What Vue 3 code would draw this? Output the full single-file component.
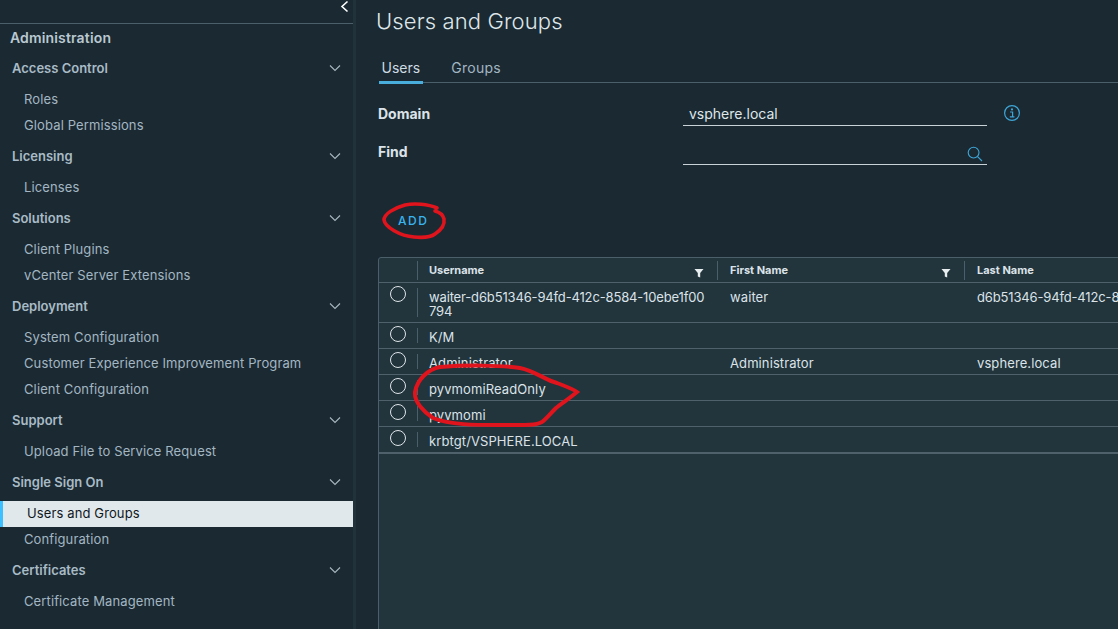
<script setup>
const groups = [
  { title: 'Access Control', items: ['Roles', 'Global Permissions'] },
  { title: 'Licensing', items: ['Licenses'] },
  { title: 'Solutions', items: ['Client Plugins', 'vCenter Server Extensions'] },
  { title: 'Deployment', items: ['System Configuration', 'Customer Experience Improvement Program', 'Client Configuration'] },
  { title: 'Support', items: ['Upload File to Service Request'] },
  { title: 'Single Sign On', items: ['Users and Groups', 'Configuration'] },
  { title: 'Certificates', items: ['Certificate Management'] }
]
const rows = [
  { user: 'waiter-d6b51346-94fd-412c-8584-10ebe1f00794', first: 'waiter', last: 'd6b51346-94fd-412c-8584-10ebe1f00794' },
  { user: 'K/M', first: '', last: '' },
  { user: 'Administrator', first: 'Administrator', last: 'vsphere.local' },
  { user: 'pyvmomiReadOnly', first: '', last: '' },
  { user: 'pyvmomi', first: '', last: '' },
  { user: 'krbtgt/VSPHERE.LOCAL', first: '', last: '' }
]
</script>

<template>
  <div class="page">
    <aside class="side">
      <div class="collapse">
        <svg width="10" height="14" viewBox="0 0 10 14"><path d="M7.5 1.5 L2 6.5 L7.5 11.5" fill="none" stroke="#fff" stroke-width="1.6"/></svg>
      </div>
      <h2 class="admin">Administration</h2>
      <section v-for="g in groups" :key="g.title" class="group">
        <div class="ghead">
          <span>{{ g.title }}</span>
          <svg width="12" height="8" viewBox="0 0 12 8"><path d="M1 1.5 L6 6.5 L11 1.5" fill="none" stroke="#a9b8c0" stroke-width="1.1"/></svg>
        </div>
        <div class="gitems">
          <a v-for="i in g.items" :key="i" class="item" :class="{ active: i === 'Users and Groups' }">{{ i }}</a>
        </div>
      </section>
    </aside>

    <main class="main">
      <h1 class="title">Users and Groups</h1>
      <nav class="tabs">
        <span class="tab on">Users</span>
        <span class="tab">Groups</span>
      </nav>
      <div class="form">
        <div class="frow">
          <label>Domain</label>
          <div class="field">vsphere.local</div>
          <svg class="info" width="18" height="18" viewBox="0 0 18 18">
            <circle cx="9" cy="9" r="7.4" fill="none" stroke="#3ea6d8" stroke-width="1.2"/>
            <circle cx="9" cy="5.4" r="1.1" fill="#3ea6d8"/>
            <path d="M7 8 H9.6 V12.6 M6.8 12.8 H11.4" fill="none" stroke="#3ea6d8" stroke-width="1.2"/>
          </svg>
        </div>
        <div class="frow find">
          <label>Find</label>
          <div class="field search">
            <svg width="16" height="16" viewBox="0 0 16 16">
              <circle cx="6.6" cy="6.6" r="5.4" fill="none" stroke="#3ea6d8" stroke-width="1.1"/>
              <path d="M10.6 10.6 L15 15" fill="none" stroke="#3ea6d8" stroke-width="1.1"/>
            </svg>
          </div>
        </div>
      </div>
      <button class="add">ADD</button>
      <div class="grid">
        <div class="tr head">
          <div class="td sel"></div>
          <div class="td user">Username<svg class="funnel" width="10" height="10" viewBox="0 0 10 10"><path d="M0.5 1 H9.5 L6.2 5 V9.5 L3.8 8.5 V5 Z" fill="#e8edf0"/></svg></div>
          <div class="td first">First Name<svg class="funnel" width="10" height="10" viewBox="0 0 10 10"><path d="M0.5 1 H9.5 L6.2 5 V9.5 L3.8 8.5 V5 Z" fill="#e8edf0"/></svg></div>
          <div class="td last">Last Name</div>
        </div>
        <div v-for="r in rows" :key="r.user" class="tr">
          <div class="td sel"><span class="radio"></span></div>
          <div class="td user" :class="{ long: r.user.length > 30 }">{{ r.user }}</div>
          <div class="td first">{{ r.first }}</div>
          <div class="td last" :class="{ long: r.last.length > 30 }">{{ r.last }}</div>
        </div>
      </div>
    </main>

    <svg class="ink" width="1118" height="629" viewBox="0 0 1118 629">
      <path d="M437 208 C428 204 414 203 405 205 C394 208 384 214 384 220 C385 227 400 236 414 237 C424 238 431 237 435 234 C441 230 445 225 444 219 C443 215 439 212 435 211" fill="none" stroke="#e0141c" stroke-width="3.6" stroke-linecap="round"/>
      <path d="M433 418 C424 412 414 402 415 392 C417 380 428 369 440 367 C465 365 500 365 520 368 C535 371 545 380 557 383 C565 386 573 389 577 392 C570 398 562 403 556 408 C550 414 546 419 542 422 C535 426 520 425 500 425 C475 425 450 425 433 418" fill="none" stroke="#e0141c" stroke-width="4" stroke-linecap="round"/>
    </svg>
  </div>
</template>

<style>
html, body { margin: 0; overflow: hidden; background: #1b2a32; }
</style>

<style scoped>
.page {
  position: relative;
  width: 1118px;
  height: 629px;
  display: flex;
  overflow: hidden;
  background: #1b2a32;
  font-family: Inter, "Open Sans", sans-serif;
  font-size: 13px;
  color: #e8edf0;
}
.side {
  width: 353px;
  flex: none;
  border-right: 3px solid #22323b;
  color: #a9bbc6;
}
.collapse {
  height: 24px;
  box-sizing: border-box;
  border-bottom: 1px solid #4b5f6b;
  display: flex;
  justify-content: flex-end;
  padding: 0 3px 0 0;
  align-items: flex-start;
}
.admin {
  margin: 0;
  height: 31px;
  line-height: 27px;
  padding-left: 10px;
  font-size: 14px;
  font-weight: 600;
  letter-spacing: 0.15px;
  color: #b9c8d1;
}
.group { padding-bottom: 4px; }
.ghead {
  height: 26px;
  padding: 0 12px;
  display: flex;
  align-items: center;
  justify-content: space-between;
  font-weight: 600;
  font-size: 13px;
  color: #a9bbc6;
}
.gitems { padding-top: 6px; }
.item {
  display: block;
  height: 26px;
  line-height: 24px;
  padding-left: 24px;
  color: #a3b6c2;
  letter-spacing: 0.12px;
}
.item.active {
  background: #e1e8ec;
  color: #10181d;
  border-left: 3px solid #3cc0ff;
}
.main {
  flex: 1;
  min-width: 0;
  padding-left: 20px;
  overflow: hidden;
}
.title {
  margin: 5px 0 0;
  font-size: 22px;
  line-height: 32px;
  font-weight: 300;
  letter-spacing: 0.12px;
  color: #dfe6ea;
}
.tabs {
  margin: 16px 0 0 3px;
  height: 30px;
  display: flex;
  gap: 26px;
  border-bottom: 1px solid #4b5f6b;
  width: 800px;
  box-sizing: border-box;
}
.tab {
  padding: 0 2.5px;
  line-height: 30px;
  height: 30px;
  box-sizing: border-box;
  color: #a3b6c2;
  font-size: 14px;
  letter-spacing: 0.3px;
}
.tab.on {
  color: #cfdbe2;
  letter-spacing: 0;
  border-bottom: 3px solid #49aedc;
  height: 31px;
}
.form { margin: 17px 0 0 2px; }
.frow {
  display: flex;
  align-items: flex-start;
  height: 40px;
}
.frow label {
  width: 305px;
  font-weight: 700;
  font-size: 14px;
  line-height: 28px;
  color: #dbe3e8;
  flex: none;
}
.find label { line-height: 24px; }
.field {
  width: 304px;
  height: 26px;
  box-sizing: border-box;
  border-bottom: 1px solid #c9d2d7;
  padding: 1px 0 0 6px;
  line-height: 26px;
  font-size: 14px;
  color: #dfe6ea;
}
.info { margin: 4px 0 0 16px; }
.find .field {
  height: 25px;
  display: flex;
  justify-content: flex-end;
  padding: 0 4px 0 0;
  align-items: center;
}
.search svg { margin-top: 4px; }
.add {
  display: block;
  margin: 33px 0 0 22px;
  padding: 0;
  background: none;
  border: 0;
  font: inherit;
  font-size: 12px;
  font-weight: 500;
  letter-spacing: 1.6px;
  line-height: 16px;
  color: #3ab4ee;
}
.grid {
  margin: 28px 0 0 2px;
  width: 900px;
  height: 400px;
  box-sizing: border-box;
  background: #22343c;
  border: 1px solid #4b5f6b;
  border-radius: 3px 0 0 0;
}
.tr {
  display: grid;
  grid-template-columns: 38px 300px 247px 1fr;
  border-bottom: 1px solid #4f626c;
  min-height: 25px;
}
.tr:last-child { border-bottom-width: 2px; }
.head { min-height: 24px; }
.td {
  position: relative;
  padding: 7px 1px 4px 12px;
  line-height: 14px;
  font-size: 13px;
  letter-spacing: 0.1px;
  word-break: break-all;
  color: #dbe3e8;
}
.td.long { letter-spacing: -0.15px; }
.td.user { padding-right: 9px; }
.head .td {
  font-size: 11px;
  font-weight: 700;
  letter-spacing: 0;
  padding-top: 5px;
  padding-bottom: 0;
}
.sel { padding: 0; }
.first { padding-left: 13px; }
.last { padding-left: 13px; white-space: nowrap; word-break: normal; }
.user::before, .first::before, .last::before {
  content: "";
  position: absolute;
  left: 0;
  top: 5px;
  bottom: 5px;
  width: 1px;
  background: #4b5f6b;
}
.head .user::before, .head .first::before, .head .last::before { top: 3px; bottom: 2px; }
.tr:not(.head) .first::before, .tr:not(.head) .last::before { display: none; }
.funnel { position: absolute; right: 13px; top: 10px; }
.radio {
  display: block;
  width: 14px;
  height: 14px;
  margin: 3px 0 0 11px;
  border: 1px solid #dfe6ea;
  border-radius: 50%;
}
.ink { position: absolute; left: 0; top: 0; pointer-events: none; }
</style>
